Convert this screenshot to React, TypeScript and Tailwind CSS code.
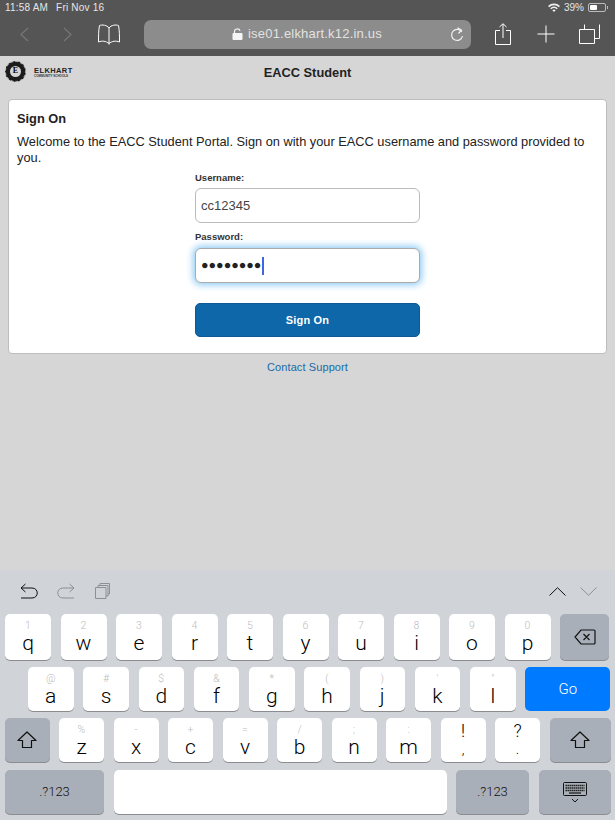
function Key({ top, label, w = "w-[46px]" }: { top?: string; label: string; w?: string }) {
  return (
    <div className={`${w} h-full shrink-0 rounded-[5px] bg-white shadow-[0_1px_0_#8a8c90] flex flex-col items-center text-black font-['Roboto',sans-serif] font-light`}>
      <span className="h-[13px] mt-[5px] text-[10.5px] leading-[13px] text-[#bcbcbc]">{top}</span>
      <span className="text-[21px] leading-[22px]">{label}</span>
    </div>
  )
}

function GrayKey({ w, children }: { w: string; children: React.ReactNode }) {
  return (
    <div className={`${w} h-full shrink-0 rounded-[5px] bg-[#a9afb8] shadow-[0_1px_0_#8a8c90] flex items-center justify-center font-['Roboto',sans-serif] font-light text-[13px] text-[#111]`}>
      {children}
    </div>
  )
}

function ShiftIcon() {
  return (
    <svg width="20" height="18" viewBox="0 0 20 18" fill="none" stroke="#111" strokeWidth="1.2">
      <path d="M10 1 L1 9.5 H5.5 V16.5 H14.5 V9.5 H19 Z" strokeLinejoin="round" />
    </svg>
  )
}

const row1 = [["1", "q"], ["2", "w"], ["3", "e"], ["4", "r"], ["5", "t"], ["6", "y"], ["7", "u"], ["8", "i"], ["9", "o"], ["0", "p"]]
const row2 = [["@", "a"], ["#", "s"], ["$", "d"], ["&", "f"], ["*", "g"], ["(", "h"], [")", "j"], ["'", "k"], ['"', "l"]]
const row3 = [["%", "z"], ["-", "x"], ["+", "c"], ["=", "v"], ["/", "b"], [";", "n"], [":", "m"]]

export default function App() {
  return (
    <div className="w-[615px] h-[820px] overflow-hidden flex flex-col bg-[#d6d6d6] font-['Liberation_Sans',Arial,sans-serif] text-[#222]">
      {/* safari chrome */}
      <div className="h-[56px] shrink-0 bg-[#555555] text-white">
        <div className="h-[15px] px-[5px] flex items-center justify-between text-[10px] text-[#e6e6e6]">
          <div className="flex gap-[8px] tracking-[0.2px]">
            <span>11:58 AM</span>
            <span>Fri Nov 16</span>
          </div>
          <div className="flex items-center gap-[4px] pr-[2px]">
            <svg width="12" height="9" viewBox="0 0 12 9" fill="#eee">
              <path d="M0 3 A8.5 8.5 0 0 1 12 3 L10.8 4.2 A6.8 6.8 0 0 0 1.2 4.2 Z" />
              <path d="M2.2 5.2 A5.3 5.3 0 0 1 9.8 5.2 L8.7 6.3 A3.8 3.8 0 0 0 3.3 6.3 Z" />
              <path d="M4.3 7.3 A2.4 2.4 0 0 1 7.7 7.3 L6 9 Z" />
            </svg>
            <span>39%</span>
            <div className="flex items-center gap-[1px]">
              <div className="w-[18px] h-[9px] rounded-[2px] border border-[#bbb] p-[1px]">
                <div className="w-[7px] h-full bg-white rounded-[1px]" />
              </div>
              <div className="w-[1px] h-[3px] bg-[#bbb]" />
            </div>
          </div>
        </div>
        <div className="flex items-center h-[41px] pb-[7px] pt-[4px]">
          <svg className="ml-[20px]" width="9" height="15" viewBox="0 0 9 15" fill="none" stroke="#777" strokeWidth="1.2"><path d="M8 1 L1 7.5 L8 14" /></svg>
          <svg className="ml-[34px]" width="9" height="15" viewBox="0 0 9 15" fill="none" stroke="#777" strokeWidth="1.2"><path d="M1 1 L8 7.5 L1 14" /></svg>
          <svg className="ml-[26px]" width="22" height="21" viewBox="0 0 22 21" fill="none" stroke="#fff" strokeWidth="1"><path d="M11 4 C9 1 4 0.5 1.5 1.5 C0.5 6 0.5 13 0.5 18 C4 16.5 8 17 11 19.5 C14 17 18 16.5 21.5 18 C21.5 13 21.5 6 20.5 1.5 C18 0.5 13 1 11 4 Z M11 4 V20.5" /></svg>
          <div className="ml-[24px] w-[327px] h-[29px] rounded-[7px] bg-[#8c8c8c] flex items-center pl-[88px] pr-[7px]">
            <svg width="11" height="12" viewBox="0 0 11 12" fill="#f5f5f5"><path d="M1.5 5 H9.5 Q10.5 5 10.5 6 V11 Q10.5 12 9.5 12 H1.5 Q0.5 12 0.5 11 V6 Q0.5 5 1.5 5 Z" /><path d="M2.5 5 V3.2 C2.5 0.3 7.5 0.3 8 2.8" fill="none" stroke="#f5f5f5" strokeWidth="1.2" /></svg>
            <span className="ml-[5px] text-[13px] text-[#e2e2e2] tracking-[0.2px]">ise01.elkhart.k12.in.us</span>
            <svg className="ml-auto" width="14" height="15" viewBox="0 0 14 15" fill="none" stroke="#f0f0f0" strokeWidth="1.2"><path d="M11.8 5 A5.5 5.5 0 1 0 12.5 9" /><path d="M7.5 0.8 L11.5 3.2 L8.5 6.5" strokeWidth="1.2" /></svg>
          </div>
          <svg className="ml-[24px]" width="16" height="22" viewBox="0 0 16 22" fill="none" stroke="#fff" strokeWidth="1"><path d="M5 7.5 H0.5 V21.5 H15.5 V7.5 H11 M8 15 V1 M4.5 4 L8 0.7 L11.5 4" /></svg>
          <svg className="ml-[26px]" width="18" height="18" viewBox="0 0 18 18" fill="none" stroke="#fff" strokeWidth="1"><path d="M9 0.5 V17.5 M0.5 9 H17.5" /></svg>
          <svg className="ml-[24px]" width="21" height="20" viewBox="0 0 21 20" fill="none" stroke="#fff" strokeWidth="1"><path d="M0.5 5.5 H15.5 V19.5 H0.5 Z M5.5 5.5 V0.5 M20.5 0.5 V14.5 H15.5" /></svg>
        </div>
      </div>

      {/* page */}
      <div className="flex-1 flex flex-col">
        <div className="h-[43px] pl-[5px] flex items-center relative">
          <div className="w-[21px] h-[21px] mb-[13px] rounded-full bg-[#1c1c1c] border border-dashed border-[#999] flex items-center justify-center">
            <div className="w-[11px] h-[11px] rounded-full bg-[#d6d6d6] flex items-center justify-center text-[8px] leading-none font-bold font-['Liberation_Serif',serif] text-black">E</div>
          </div>
          <div className="ml-[8px] mb-[11px] flex flex-col">
            <span className="text-[7.5px] leading-[8px] font-bold tracking-[0.4px] text-[#222]">ELKHART</span>
            <span className="text-[3px] leading-[3px] font-bold text-[#333] whitespace-nowrap">COMMUNITY SCHOOLS</span>
          </div>
          <h1 className="absolute left-0 right-0 top-[9px] text-center text-[12.8px] leading-[15px] font-bold text-[#222]">EACC Student</h1>
        </div>

        <div className="mx-[8px] h-[255px] bg-white border border-[#bdbdbd] rounded-[4px] px-[8px] pt-[11px]">
          <h2 className="text-[12.8px] leading-[15px] font-bold text-[#222]">Sign On</h2>
          <p className="mt-[8px] text-[12.8px] leading-[16px] text-[#222]">Welcome to the EACC Student Portal. Sign on with your EACC username and password provided to you.</p>
          <div className="ml-[178px] mt-[4px] w-[225px] flex flex-col">
            <label className="h-[16px] text-[9.5px] leading-[16px] font-bold text-[#333]">Username:</label>
            <div className="mt-[2px] h-[35px] rounded-[6px] border border-[#bbbbbb] flex items-center pl-[5px] text-[13px] text-[#444]">cc12345</div>
            <label className="mt-[6px] h-[16px] text-[9.5px] leading-[16px] font-bold text-[#333]">Password:</label>
            <div className="mt-[3px] h-[35px] rounded-[6px] border border-[#aaaaaa] bg-white shadow-[0_0_7px_2px_#8fcbf5] flex items-center pl-[5px]">
              <span className="text-[12.5px] leading-none text-[#222]">●●●●●●●●</span>
              <span className="ml-[1px] w-[2px] h-[18px] bg-[#3f66e0]" />
            </div>
            <button className="mt-[20px] h-[34px] rounded-[5px] bg-[#0d67a9] border border-[#0b5a95] text-white text-[11px] font-bold tracking-[0.2px]">Sign On</button>
          </div>
        </div>

        <a className="mt-[7px] text-center text-[11px] leading-[13px] text-[#1a6aa8] tracking-[0.1px]">Contact Support</a>
      </div>

      {/* ipad keyboard */}
      <div className="h-[250px] shrink-0 bg-[#d0d3d8] flex flex-col">
        <div className="h-[44px] flex items-center pb-[2px] pl-[20px] pr-[18px]">
          <svg width="18" height="16" viewBox="0 0 18 16" fill="none" stroke="#111" strokeWidth="1"><path d="M1 5 H12 C19 5 19 15 12 15 H1 M5.5 1 L1 5 L5.5 9" /></svg>
          <svg className="ml-[19px]" width="18" height="16" viewBox="0 0 18 16" fill="none" stroke="#8d9096" strokeWidth="1"><path d="M17 5 H6 C-1 5 -1 15 6 15 H17 M12.5 1 L17 5 L12.5 9" /></svg>
          <svg className="ml-[20px]" width="15" height="16" viewBox="0 0 15 16" fill="none" stroke="#8d9096" strokeWidth="1"><path d="M0.5 4.5 H11 V15.5 H0.5 Z M3 4.5 V2.5 H13 V13 H11 M5 2.5 V0.5 H14.5 V11 H13" /></svg>
          <svg className="ml-auto" width="17" height="9" viewBox="0 0 17 9" fill="none" stroke="#111" strokeWidth="1"><path d="M0.5 8.5 L8.5 0.7 L16.5 8.5" /></svg>
          <svg className="ml-[14px]" width="17" height="9" viewBox="0 0 17 9" fill="none" stroke="#8d9096" strokeWidth="1"><path d="M0.5 0.5 L8.5 8.3 L16.5 0.5" /></svg>
        </div>
        <div className="h-[46px] pl-[5px] flex gap-[9.5px]">
          {row1.map(([t, l]) => <Key key={l} top={t} label={l} />)}
          <GrayKey w="w-[49px]">
            <svg width="22" height="16" viewBox="0 0 22 16" fill="none" stroke="#111" strokeWidth="1.2"><path d="M7 1 H20 Q21 1 21 2 V14 Q21 15 20 15 H7 L1 8 Z M9.5 5 L15.5 11 M15.5 5 L9.5 11" /></svg>
          </GrayKey>
        </div>
        <div className="mt-[7px] h-[44px] pl-[28px] flex gap-[9.75px]">
          {row2.map(([t, l]) => <Key key={l} top={t} label={l} w="w-[45.5px]" />)}
          <div className="w-[85px] h-full rounded-[5px] bg-[#007aff] flex items-center justify-center font-['Roboto',sans-serif] font-light text-[15px] text-white">Go</div>
        </div>
        <div className="mt-[7px] h-[44px] pl-[5px] flex gap-[9.5px]">
          <GrayKey w="w-[44.5px]"><ShiftIcon /></GrayKey>
          {row3.map(([t, l]) => <Key key={l} top={t} label={l} w="w-[45px]" />)}
          <div className="w-[45px] h-full rounded-[5px] bg-white shadow-[0_1px_0_#8a8c90] flex flex-col items-center text-black font-['Roboto',sans-serif] font-light">
            <span className="text-[18px] leading-[22px] mt-[2px]">!</span>
            <span className="text-[14px] leading-[14px]">,</span>
          </div>
          <div className="w-[45px] h-full rounded-[5px] bg-white shadow-[0_1px_0_#8a8c90] flex flex-col items-center text-black font-['Roboto',sans-serif] font-light">
            <span className="text-[18px] leading-[22px] mt-[2px]">?</span>
            <span className="text-[14px] leading-[14px]">.</span>
          </div>
          <GrayKey w="w-[61px]"><ShiftIcon /></GrayKey>
        </div>
        <div className="mt-[8px] h-[44px] pl-[5px] flex gap-[9.5px]">
          <GrayKey w="w-[99px]">.?123</GrayKey>
          <div className="w-[333px] h-full rounded-[5px] bg-white shadow-[0_1px_0_#8a8c90]" />
          <GrayKey w="w-[73px]">.?123</GrayKey>
          <GrayKey w="w-[72px]">
            <svg width="24" height="21" viewBox="0 0 24 21" fill="none" stroke="#111"><rect x="0.5" y="0.5" width="23" height="13" rx="1" /><path d="M2.5 3.5 H21.5 M2.5 6 H21.5 M2.5 8.5 H21.5" strokeWidth="1.4" strokeDasharray="1.4 0.6" /><path d="M6 11 H18" strokeWidth="1.2" /><path d="M9 17 L12 20 L15 17" strokeWidth="1" /></svg>
          </GrayKey>
        </div>
      </div>
    </div>
  )
}
